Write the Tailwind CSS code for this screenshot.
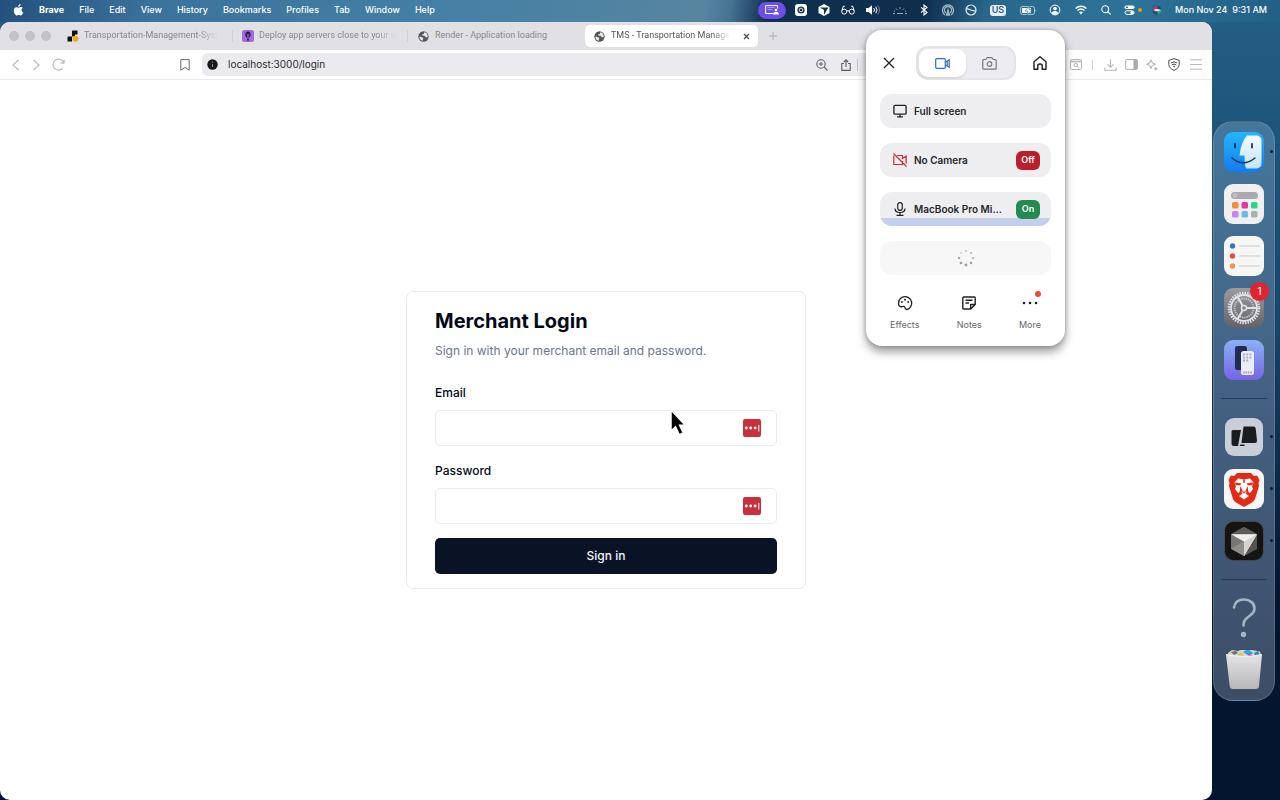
<!DOCTYPE html>
<html lang="en">
<head>
    <meta charset="UTF-8">
    <meta name="viewport" content="width=device-width, initial-scale=1.0">
    <title>TMS - Transportation Management System</title>
    <script src="https://cdn.jsdelivr.net/npm/@tailwindcss/browser@4"></script>
    <style>
        body {
            font-family: 'Inter', 'Liberation Sans', sans-serif;
        }
    </style>
</head>
<body class="relative flex h-screen flex-col overflow-hidden bg-linear-to-b from-[#245f86] via-[#17466a] via-40% to-[#041530] to-75%">
    <!-- Shared icons -->
    <svg class="hidden">
        <symbol id="globe" viewBox="0 0 16 16">
            <circle cx="8" cy="8" r="7.5" fill="#55565a"/>
            <path d="M2 8.2 5.5 8.6 8 10.5 7 11.6 7.2 14A6.2 6.2 0 0 1 2 8.2ZM9 1.9 8.6 4.2 6.4 4.6 6 6.6 9.6 7 11.6 9.6 14 8.8A6.2 6.2 0 0 0 9 1.9Z" fill="#e9e8ec"/>
        </symbol>
        <symbol id="lastpass" viewBox="0 0 18 18">
            <rect width="18" height="18" rx="2" fill="#c9303c"/>
            <circle cx="3.3" cy="9" r="1.4" fill="#fff"/>
            <circle cx="7.7" cy="9" r="1.4" fill="#fff"/>
            <circle cx="12.1" cy="9" r="1.4" fill="#fff"/>
            <path d="M15.8 6v6.5" stroke="#fff" stroke-width="1"/>
        </symbol>
    </svg>

    <!-- Menu bar -->
    <header class="flex h-[22px] shrink-0 items-center justify-between px-[13px] pb-0.5 text-[9px] text-white [background-image:linear-gradient(100deg,#24507d_0%,#3a739c_12%,#4480a5_35%,#5785a0_55%,#467391_57%,#102e4f_60%,#0f2d4c_72%,#28678b_77%,#2c7398_88%,#235f87_100%)]">
        <nav class="flex items-center gap-[15px] font-medium">
            <button aria-label="Apple menu">
                <svg class="h-3 w-[11px]" viewBox="0 0 22 24" fill="#fff"><path d="M15.2 0c.2 1.5-.4 2.9-1.3 4-.9 1.1-2.2 1.8-3.5 1.7-.2-1.4.5-2.9 1.3-3.8C12.6.8 14.100.1 15.2 0ZM19.8 8.1c-2 1.200-2.700 2.700-2.600 4.400.1 2 1.200 3.500 3.200 4.300-.9 2.600-3 6.200-5.200 6.200-1.500 0-2-.9-3.800-.9-1.900 0-2.400.9-3.800.9C4.800 23 1.600 17.500 1.600 13c0-4.300 2.700-6.700 5.400-6.700 1.800 0 3.200 1.100 4.300 1.100 1 0 2.700-1.200 4.800-1.200 1.500 0 2.900.7 3.700 1.900Z"/></svg>
            </button>
            <button class="font-bold">Brave</button>
            <button>File</button>
            <button>Edit</button>
            <button>View</button>
            <button>History</button>
            <button>Bookmarks</button>
            <button>Profiles</button>
            <button>Tab</button>
            <button>Window</button>
            <button>Help</button>
        </nav>
        <div class="flex items-center">
            <button aria-label="Screen sharing" class="mr-[7px] flex h-[17px] w-7 items-center justify-center rounded-full bg-[#6c4ee8]">
                <svg class="h-[10px] w-[14px]" viewBox="0 0 14 10" fill="none" stroke="#fff"><path d="M8 8.5H.6V.6h12v3" /><path d="M2.5 2.5h7M2.5 4.5h5" stroke-opacity=".4"/><circle cx="11" cy="5" r="1.3" fill="#fff" stroke="none"/><path d="M8 9.5c0-3.8 6-3.8 6 0Z" fill="#fff" stroke="none"/></svg>
            </button>
            <div class="flex items-center">
                <button aria-label="Recorder" class="flex w-[15px] justify-center"><svg class="size-3" viewBox="0 0 12 12"><rect width="12" height="12" rx="3" fill="#fff"/><circle cx="6" cy="6" r="3.6" fill="#1b3552"/><circle cx="6" cy="6" r="1.8" fill="none" stroke="#fff" stroke-width=".8"/></svg></button>
                <button aria-label="Cursor" class="ml-2 flex w-[15px] justify-center"><svg class="size-3" viewBox="0 0 12 12"><path d="M6 0 11.5 3v6L6 12 .5 9V3Z" fill="#fff"/><path d="M1.8 3.6h8.6L6 11V6Z" fill="#12304f"/></svg></button>
                <button aria-label="Reader" class="ml-[9px] flex w-4 justify-center"><svg class="h-[10px] w-[14px]" viewBox="0 0 14 10" fill="none" stroke="#fff"><circle cx="3.2" cy="6.6" r="2.5"/><circle cx="10.8" cy="6.6" r="2.5"/><path d="M5.7 6.2q1.3-1 2.6 0M.8 5.5 2.5 1l1.2.4M13.2 5.5 11.5 1l-1.2.4"/></svg></button>
                <button aria-label="Volume" class="ml-[9px] flex w-4 justify-center"><svg class="h-[10px] w-[15px]" viewBox="0 0 15 10" fill="none" stroke="#fff"><path d="M0 3h2.5L6 .3v9.4L2.5 7H0Z" fill="#fff" stroke="none"/><path d="M7.8 3q1.3 2 0 4M9.8 1.7q2.3 3.3 0 6.6"/><path d="M11.8.5q3.4 4.5 0 9" stroke-opacity=".4"/></svg></button>
                <button aria-label="Keyboard brightness" class="ml-[11px] flex w-4 justify-center opacity-60"><svg class="h-[10px] w-[14px]" viewBox="0 0 14 10" fill="none" stroke="#fff"><path d="M0 8.5h2M4 8.5h6M12 8.5h2M7 2v2M3 3.5l1.2 1.3M11 3.5 9.8 4.8M1 6l1 .4M13 6l-1 .4"/></svg></button>
                <button aria-label="Bluetooth" class="ml-[10px] flex w-3 justify-center"><svg class="h-3 w-2" viewBox="0 0 8 12" fill="none" stroke="#fff" stroke-width="1.1"><path d="m1 3.3 6 5.2L4 11V1l3 2.5-6 5.2"/></svg></button>
                <button aria-label="AirDrop" class="ml-3 flex w-3 justify-center opacity-60"><svg class="size-3" viewBox="0 0 12 12" fill="none" stroke="#fff" stroke-width="1.3"><path d="M3 11a5.5 5.5 0 1 1 6 0"/><path d="M3.9 9A3.6 3.6 0 1 1 8.1 9"/><path d="M4.5 11 6 6l1.5 5Z" fill="#fff"/></svg></button>
                <button aria-label="VPN" class="ml-[11px] flex w-3 justify-center"><svg class="size-3" viewBox="0 0 12 12" fill="none" stroke="#e5edf3" stroke-width="1.2"><circle cx="6" cy="6" r="5"/><path d="M1.5 5c3-1 5 3 9 1.5"/></svg></button>
                <button class="ml-[13px] flex h-[11px] w-4 items-center justify-center rounded-[3px] bg-white/90 font-semibold text-[#276489]">US</button>
                <button aria-label="Battery" class="ml-[14px] flex w-[17px] justify-center"><svg class="h-[9px] w-[17px]" viewBox="0 0 17 9"><rect x=".5" y=".5" width="14" height="8" rx="2" fill="none" stroke="#fff" stroke-opacity=".6"/><path d="M2 2h9v5H2Z" fill="#fff"/><path d="M15.5 3q1.5 1.5 0 3Z" fill="#fff" fill-opacity=".6"/><path d="M9.5 0 5 5h3L7 9l5-5.3H9Z" fill="#fff" stroke="#2a6b90" stroke-width=".6"/></svg></button>
                <button aria-label="Account" class="ml-3 flex w-3 justify-center"><svg class="size-3" viewBox="0 0 12 12"><circle cx="6" cy="6" r="4.9" fill="none" stroke="#fff"/><circle cx="6" cy="4.6" r="1.8" fill="#fff"/><path d="M2.6 9.2C3.6 6.3 8.4 6.3 9.4 9.2 8 11 4 11 2.6 9.2Z" fill="#fff"/></svg></button>
                <button aria-label="Wi-Fi" class="ml-[14px] flex w-3 justify-center"><svg class="h-[10px] w-3" viewBox="0 0 12 10" fill="none" stroke="#fff" stroke-width="1.4"><path d="M.6 3.4a8 8 0 0 1 10.8 0M2.5 5.5a5.3 5.3 0 0 1 7 0"/><path d="M4 7.3a3.2 3.2 0 0 1 4 0L6 9.5Z" fill="#fff" stroke="none"/></svg></button>
                <button aria-label="Spotlight" class="ml-[14px] flex w-[10px] justify-center"><svg class="size-[10px]" viewBox="0 0 10 10" fill="none" stroke="#fff" stroke-width="1.1"><circle cx="4.2" cy="4.2" r="3.4"/><path d="m6.7 6.7 2.8 2.8"/></svg></button>
                <button aria-label="Control Center" class="ml-[13px] flex w-[18px] items-center gap-[3px]"><svg class="h-[10px] w-[11px] shrink-0" viewBox="0 0 11 10"><rect x=".5" y=".5" width="10" height="3.6" rx="1.8" fill="#fff"/><circle cx="3" cy="2.3" r="1" fill="#2a6b90"/><rect x="1" y="5.8" width="9" height="3.6" rx="1.8" fill="none" stroke="#fff"/><circle cx="8" cy="7.6" r="1.7" fill="#fff"/></svg><span class="size-1 shrink-0 rounded-full bg-[#e39a2d]"></span></button>
                <button aria-label="Siri" class="ml-[10px] flex w-[10px] justify-center"><svg class="size-[10px]" viewBox="0 0 10 10"><circle cx="5" cy="5" r="4.5" fill="#2c4668"/><path d="M1 5c0-3 2-4.5 4-4.5L6 5Z" fill="#a83f7d"/><path d="m5 5 4.5-1C9.5 7 8 9 6 9.5Z" fill="#31a69c"/><path d="M1.5 5q3-2 7 0-4 2.5-7 0Z" fill="#f6e5f3"/></svg></button>
            </div>
            <time class="ml-[13px] font-medium whitespace-pre">Mon Nov 24  9:31 AM</time>
        </div>
    </header>

    <div class="flex min-h-0 flex-1">
        <!-- Browser window -->
        <section class="flex min-w-0 flex-1 flex-col overflow-hidden rounded-[10px] bg-white">
            <!-- Tab strip -->
            <div class="flex h-7 shrink-0 items-center bg-[#e1e0e5] font-['Roboto'] text-[9px] text-[#88878d]">
                <div class="flex w-[58px] shrink-0 gap-[6px] pl-[9px]">
                    <button aria-label="Close" class="size-[10px] rounded-full bg-[#c3c2c6]"></button>
                    <button aria-label="Minimize" class="size-[10px] rounded-full bg-[#c3c2c6]"></button>
                    <button aria-label="Zoom" class="size-[10px] rounded-full bg-[#c3c2c6]"></button>
                </div>
                <button class="flex h-3 w-[175px] shrink-0 items-center gap-[5px] border-r border-[#d0cfd4] pr-1 pl-[9px]">
                    <svg class="size-3 shrink-0" viewBox="0 0 12 12"><path d="M5 1.5C5 .7 5.5.5 6 .5h4.5v4H8v2H5v5H.5V7.5C.5 6.8 1 6.5 1.700 6.5H5Z" fill="#111"/><circle cx="8.5" cy="8.8" r="3" fill="#efa928"/></svg>
                    <span class="mask-r-from-85% whitespace-nowrap">Transportation-Management-Syst</span>
                </button>
                <button class="flex h-3 w-[175px] shrink-0 items-center gap-[5px] border-r border-[#d0cfd4] pr-1 pl-[9px]">
                    <svg class="size-3 shrink-0" viewBox="0 0 12 12"><rect width="12" height="12" rx="2" fill="#a06bdd"/><path d="M6 1.5C9.7 1.5 9.2 6.5 6.8 8H5.2C2.8 6.5 2.3 1.5 6 1.5ZM5 8.8h2v1.7H5Z" fill="#2c1650"/><path d="M5 3.5 6 7.5l1-4" fill="none" stroke="#a06bdd" stroke-width=".7"/></svg>
                    <span class="mask-r-from-85% whitespace-nowrap">Deploy app servers close to your u</span>
                </button>
                <button class="flex h-3 w-[177px] shrink-0 items-center gap-[6px] pr-1 pl-[10px]">
                    <svg class="size-[11px] shrink-0"><use href="#globe"/></svg>
                    <span class="whitespace-nowrap">Render - Application loading</span>
                </button>
                <div class="flex h-[22px] w-[173px] shrink-0 items-center justify-between rounded-[5px] bg-white pr-2 pl-[9px] text-[#55555a]">
                    <button class="flex items-center gap-[6px]">
                        <svg class="size-[11px] shrink-0"><use href="#globe"/></svg>
                        <span class="mask-r-from-85% whitespace-nowrap">TMS - Transportation Manage</span>
                    </button>
                    <button aria-label="Close tab"><svg class="size-[7px]" viewBox="0 0 7 7" stroke="#4a4a4f" stroke-width="1.2"><path d="m1 1 5 5M6 1 1 6"/></svg></button>
                </div>
                <button aria-label="New tab" class="ml-[11px]"><svg class="size-2" viewBox="0 0 8 8" stroke="#a9a8ad"><path d="M4 0v8M0 4h8"/></svg></button>
            </div>

            <!-- Toolbar -->
            <div class="flex h-[30px] shrink-0 items-center border-b border-[#e9e8ea] pr-[10px] pl-[11px]">
                <button aria-label="Back"><svg class="h-3 w-[9px]" viewBox="0 0 9 12" fill="none" stroke="#bbb" stroke-width="1.2"><path d="M7.5 1 2 6l5.5 5"/></svg></button>
                <button aria-label="Forward" class="ml-3"><svg class="h-3 w-[9px]" viewBox="0 0 9 12" fill="none" stroke="#bbb" stroke-width="1.2"><path d="m1.5 1 5.5 5-5.5 5"/></svg></button>
                <button aria-label="Reload" class="ml-[11px]"><svg class="size-[13px]" viewBox="0 0 13 13" fill="none" stroke="#bbb" stroke-width="1.2"><path d="M11.8 4.8A5.5 5.5 0 1 0 10.5 10.5M12 1.5v3.7H8.5"/></svg></button>
                <button aria-label="Bookmark this page" class="ml-[115px]"><svg class="h-3 w-[10px]" viewBox="0 0 10 12" fill="none" stroke="#68686e"><path d="M.8.6h8.4v10.6L5 8.4.8 11.2Z"/></svg></button>
                <div class="ml-3 flex h-[23px] flex-1 items-center rounded-[6px] bg-[#ebeaef] pl-[5px]">
                    <svg class="size-[11px] shrink-0" viewBox="0 0 11 11"><circle cx="5.5" cy="5.5" r="5.2" fill="#19191c"/><path d="M5.5 5v3M5.5 2.8v1" stroke="#8c8c90" stroke-width="1.1"/></svg>
                    <input type="text" aria-label="Address" value="localhost:3000/login" class="ml-[10px] min-w-0 flex-1 bg-transparent text-[10px] text-[#2c2c30] outline-none">
                    <button aria-label="Zoom level"><svg class="size-3" viewBox="0 0 12 12" fill="none" stroke="#5d5d63" stroke-width="1.1"><circle cx="5" cy="5" r="4.2"/><path d="m8.2 8.2 3.3 3.3M5 3v4M3 5h4"/></svg></button>
                    <button aria-label="Share" class="ml-[13px]"><svg class="h-3 w-[10px]" viewBox="0 0 10 12" fill="none" stroke="#5d5d63" stroke-width="1.1"><path d="M3 4.5H.8v6.9h8.4V4.5H7M5 8V1M2.8 3 5 .8 7.2 3"/></svg></button>
                    <span class="mr-52 ml-[6px] h-3 w-px bg-[#c6c5ca]"></span>
                </div>
                <div class="flex items-center">
                    <button aria-label="Search tabs" class="ml-1"><svg class="h-[11px] w-3" viewBox="0 0 12 11" fill="none" stroke="#b4b4b6"><rect x=".5" y=".5" width="11" height="10" rx="1"/><path d="M.5 2.500h11" stroke-width="1.5"/><circle cx="5.8" cy="6" r="1.7"/><path d="m7 7.2 1.5 1.5"/></svg></button>
                    <span class="ml-[10px] h-[10px] w-px bg-[#cfcfd1]"></span>
                    <button aria-label="Downloads" class="ml-[11px]"><svg class="h-3 w-[13px]" viewBox="0 0 13 12" fill="none" stroke="#b4b4b6" stroke-width="1.1"><path d="M6.5.5v7.5M3.5 5.3l3 3 3-3M.8 8.5v2.8h11.4V8.5"/></svg></button>
                    <button aria-label="Sidebar" class="ml-2"><svg class="h-[11px] w-[13px]" viewBox="0 0 13 11"><rect x=".6" y=".6" width="11.8" height="9.8" rx="1" fill="none" stroke="#aaa"/><path d="M8.5 1h3.7v9H8.5Z" fill="#aaa"/></svg></button>
                    <button aria-label="Leo AI" class="ml-2"><svg class="size-3" viewBox="0 0 12 12" fill="none" stroke="#aaa"><path d="M5 .8 6.3 3.9 9.4 5.2 6.3 6.5 5 9.6 3.7 6.5.6 5.2 3.7 3.9Z"/><path d="M9.8 8v3.5M8 9.8h3.5"/></svg></button>
                    <button aria-label="VPN shield" class="ml-[10px]"><svg class="h-[13px] w-3" viewBox="0 0 12 13" fill="none" stroke="#4b4b50"><path d="M6 .6 11.2 2.4V6.5Q10.8 10.5 6 12.4 1.2 10.5.8 6.5V2.4Z"/><path d="M2.8 5q3.2-2.2 6.4 0M3.8 6.8q2.2-1.4 4.4 0M5 8.5q1-.6 2 0"/></svg></button>
                    <button aria-label="Main menu" class="ml-[10px]"><svg class="h-[11px] w-3" viewBox="0 0 12 11" stroke="#b8b8ba"><path d="M0 .8h12M0 5.5h12M0 10.2h12"/></svg></button>
                </div>
            </div>

            <!-- Login page -->
            <main class="flex flex-1 items-center justify-center">
                <form class="w-full max-w-[400px] rounded-[7px] border border-[#e9eaee] px-7 pt-4 pb-[14px] text-[12px] text-[#020817]">
                    <h1 class="text-[20px] leading-[26px] font-bold">Merchant Login</h1>
                    <p class="mt-[7px] leading-5 text-[#69758a]">Sign in with your merchant email and password.</p>
                    <label for="email" class="mt-[22px] block leading-5 font-medium">Email</label>
                    <div class="relative mt-[7px]">
                        <input id="email" type="email" class="block h-9 w-full rounded-[5px] border border-[#e9ebef] pr-11 pl-3 outline-none">
                        <svg class="absolute top-[9px] right-4 size-[18px]"><use href="#lastpass"/></svg>
                    </div>
                    <label for="password" class="mt-[15px] block leading-5 font-medium">Password</label>
                    <div class="relative mt-[7px]">
                        <input id="password" type="password" class="block h-9 w-full rounded-[5px] border border-[#e9ebef] pr-11 pl-3 outline-none">
                        <svg class="absolute top-[9px] right-4 size-[18px]"><use href="#lastpass"/></svg>
                    </div>
                    <button type="button" class="mt-[14px] block h-9 w-full rounded-[5px] bg-[#0a1326] font-medium text-[#f3f5f8]">Sign in</button>
                </form>
            </main>
        </section>

        <!-- Dock -->
        <aside class="flex w-[68px] shrink-0 items-center pl-px">
            <nav class="flex w-[62px] flex-col items-center gap-3 rounded-[20px] border border-white/15 bg-linear-to-b from-[#43779b] via-[#446284] via-45% to-[#3c4d66] py-[10px]">
                <button aria-label="Finder" class="relative">
                    <svg class="size-10" viewBox="0 0 40 40">
                        <defs>
                            <linearGradient id="finder" x1="0" y1="0" x2="0" y2="1"><stop offset="0" stop-color="#25b6f8"/><stop offset="1" stop-color="#127cf0"/></linearGradient>
                            <linearGradient id="face" x1="0" y1="0" x2="0" y2="1"><stop offset="0" stop-color="#f6faff"/><stop offset="1" stop-color="#c5e4fb"/></linearGradient>
                        </defs>
                        <rect width="40" height="40" rx="9" fill="url(#finder)"/>
                        <path d="M23 3.500h9.500a5 5 0 0 1 5 5v23a5 5 0 0 1-5 5H22q-1.500-5-1.500-13H15.500Q17 10 23 3.500Z" fill="url(#face)"/>
                        <path d="M11 12v3.500M28 12v3.500" stroke="#153656" stroke-width="1.8" stroke-linecap="round"/>
                        <path d="M8 26q11 9.500 23 0" fill="none" stroke="#153656" stroke-width="1.5" stroke-linecap="round"/>
                    </svg>
                    <span class="absolute top-[18px] -right-[9px] size-[3px] rounded-full bg-[#071629]"></span>
                </button>
                <button aria-label="Launchpad">
                    <svg class="size-10" viewBox="0 0 40 40">
                        <rect width="40" height="40" rx="9" fill="#f0f0f2"/>
                        <rect x="7" y="8" width="27" height="7" rx="3.5" fill="#aaa9ad"/><circle cx="11" cy="11.5" r="1.5" fill="none" stroke="#e0e0e3" stroke-width=".8"/>
                        <rect x="8" y="18" width="6.5" height="6.5" rx="1.5" fill="#ee9239"/><rect x="17.5" y="18" width="6.5" height="6.5" rx="1.5" fill="#e437a0"/><rect x="27" y="18" width="6.5" height="6.5" rx="1.5" fill="#28d789"/>
                        <rect x="8" y="27" width="6.5" height="6.5" rx="1.5" fill="#c685f2"/><rect x="17.5" y="27" width="6.5" height="6.5" rx="1.5" fill="#67bde8"/><rect x="27" y="27" width="6.5" height="6.5" rx="1.5" fill="#aeadaf"/>
                    </svg>
                </button>
                <button aria-label="Reminders">
                    <svg class="size-10" viewBox="0 0 40 40">
                        <rect width="40" height="40" rx="9" fill="#f6f6f7"/>
                        <circle cx="8.5" cy="10" r="2.7" fill="#3476cf"/><circle cx="8.5" cy="20" r="2.7" fill="#df4f48"/><circle cx="8.5" cy="30" r="2.7" fill="#eb9550"/>
                        <path d="M15 10h21M15 20h21M15 30h21" stroke="#c9c9cb" stroke-width="1"/>
                    </svg>
                </button>
                <button aria-label="System Settings" class="relative">
                    <svg class="size-10" viewBox="0 0 40 40">
                        <defs><linearGradient id="settings" x1="0" y1="0" x2="0" y2="1"><stop offset="0" stop-color="#9a9ca0"/><stop offset="1" stop-color="#606267"/></linearGradient></defs>
                        <rect width="40" height="40" rx="9" fill="url(#settings)"/>
                        <g fill="none" stroke="#e2e3e5">
                            <circle cx="20" cy="20" r="15" stroke-width="2.5" stroke-dasharray="1.5 1.12"/>
                            <circle cx="20" cy="20" r="13" stroke-width="1.8"/>
                            <circle cx="20" cy="20" r="9.5" stroke="#c4c5c8" stroke-width="2" stroke-dasharray="1.3 .9"/>
                            <circle cx="20" cy="20" r="2.5" stroke-width="1.5"/>
                            <path d="M22.5 20H33M18.700 17.800 13.500 8.800M18.700 22.200 13.500 31.200" stroke-width="2"/>
                        </g>
                    </svg>
                    <span class="absolute -top-[6px] -right-[5px] flex size-[19px] items-center justify-center rounded-full bg-[#dc2530] text-[10px] text-white">1</span>
                </button>
                <button aria-label="iPhone Mirroring">
                    <svg class="size-10" viewBox="0 0 40 40">
                        <defs><linearGradient id="mirror" x1="0" y1="0" x2="0" y2="1"><stop offset="0" stop-color="#8bb0f4"/><stop offset="1" stop-color="#7565e6"/></linearGradient></defs>
                        <rect width="40" height="40" rx="9" fill="url(#mirror)"/>
                        <rect x="11" y="6" width="12" height="24" rx="2.5" fill="#202c54"/>
                        <rect x="17" y="11" width="13" height="24" rx="2.5" fill="#e9edf8"/>
                        <path d="M19 14.5h9M19 17.5h9M19 20.5h6" stroke="#a9afc3" stroke-width="2" stroke-dasharray="2 1.2"/>
                        <path d="M19 32.5h9" stroke="#9aa2bb" stroke-width="2" stroke-dasharray="1.6 .8"/>
                    </svg>
                </button>
                <hr class="my-[6px] w-[46px] border-[#263d58]">
                <button aria-label="Screen recorder" class="relative">
                    <svg class="size-10" viewBox="0 0 40 40">
                        <rect x="1" y="1" width="38" height="38" rx="9" fill="#c9ced8"/>
                        <path d="M9 13h8l-3 16H10q-2.500 0-2.500-2.500v-12Q7.500 13 9 13Z" fill="#1b1c20"/>
                        <path d="M19.500 9.500h10q2 0 2.200 2l1.300 12q.2 2.500-2 2.500H17.500Z" fill="#1b1c20"/>
                        <path d="M16.500 27.500h4v1.500h-5Z" fill="#1b1c20"/>
                    </svg>
                    <span class="absolute top-[18px] -right-[9px] size-[3px] rounded-full bg-[#071629]"></span>
                </button>
                <button aria-label="Brave" class="relative">
                    <svg class="size-10" viewBox="0 0 40 40">
                        <rect width="40" height="40" rx="9" fill="#f7f6f5"/>
                        <path d="m13 4 14 0 3 3 3-.5 2.500 4.500-1 3 .5 3-4 13q-1 2-3 3.500l-8 4.500-8-4.500q-2-1.500-3-3.500L5 17l.5-3-1-3L7 6.500l3 .5Z" fill="#e32a16"/>
                        <path d="m14 9.500 6 1 6-1 3.500 4-1.500 4 1 2.500-3 4-3-1.500-1.500 2 3.500 2.500-5 3.500-5-3.500 3.500-2.500-1.500-2L14 24l-3-4 1-2.500-1.500-4Z" fill="#fff"/>
                        <path d="m11 13.500 6.500 1-1.500 2-4.500-.5ZM29 13.500l-6.500 1 1.500 2 4.500-.5ZM16.500 17l2 5-3 1.500M23.500 17l-2 5 3 1.500M17.500 22.500h5L20 24.500ZM19 10.500h2l-.5 3.500h-1Z" fill="#e32a16"/>
                    </svg>
                    <span class="absolute top-[18px] -right-[9px] size-[3px] rounded-full bg-[#071629]"></span>
                </button>
                <button aria-label="Cursor" class="relative">
                    <svg class="size-10" viewBox="0 0 40 40">
                        <rect x=".5" y=".5" width="39" height="39" rx="9" fill="#141412" stroke="#4b4a48"/>
                        <path d="M20 6 33 13.200v14.600L20 35 7 27.800V13.200Z" fill="#777675"/>
                        <path d="M7 13.200 20 6l13 7.200Z" fill="#5d5c5b"/>
                        <path d="M7 27.800 20 20v15Z" fill="#8f8e8d"/>
                        <path d="M33 27.800V13.200L20 35Z" fill="#555453"/>
                        <path d="M7 13.200h26L20 35V20.500Z" fill="#f2f1ef"/>
                        <path d="M20 20.500 33 13.200 20 35Z" fill="#d5d4d2"/>
                    </svg>
                    <span class="absolute top-[18px] -right-[9px] size-[3px] rounded-full bg-[#071629]"></span>
                </button>
                <hr class="my-[6px] w-[46px] border-[#263d58]">
                <button aria-label="Missing application">
                    <svg class="size-10" viewBox="0 0 40 40" fill="none" stroke="#a7b4c4" stroke-width="2.6" stroke-linecap="round"><path d="M10 9.500C11 3 16 1.500 20 1.500c6 0 10.500 3.500 10.500 9 0 8.500-11 6.500-11 17"/><circle cx="19.5" cy="36.5" r="1.4" fill="#a7b4c4"/></svg>
                </button>
                <button aria-label="Trash">
                    <svg class="size-10" viewBox="0 0 40 40">
                        <defs><linearGradient id="bin" x1="0" y1="0" x2="0" y2="1"><stop offset="0" stop-color="#e4e3e5"/><stop offset="1" stop-color="#b7b6b9"/></linearGradient></defs>
                        <path d="m4 3 4-3 6 1 4-2 5 1 5 0 8 1.500 1 4-16 3-17-2Z" fill="#d2d4d4"/>
                        <path d="m19 2 5-3 5 4-4 3Z" fill="#32a5d4"/><path d="m30 3 4-2 2 4-5 2Z" fill="#3b83bd"/><path d="m14 4 4-1 2 4h-6Z" fill="#d9c33b"/><path d="m23 4 6 1-3 2Z" fill="#c54897"/><path d="m7 2 5-1 2 2-4 2Z" fill="#6d7079"/>
                        <path d="M2 4.500q18 3.800 36 0l-3 31.500q-.3 3-3 3H9q-3 0-3.300-3Z" fill="url(#bin)"/>
                        <path d="M2 4.500q18 3.800 36 0" fill="none" stroke="#f4f4f5"/>
                    </svg>
                </button>
            </nav>
        </aside>
    </div>

    <!-- Recorder panel, floats over the browser -->
    <div class="absolute top-[30px] right-[215px] w-[199px] rounded-[16px] bg-white px-[14px] pt-4 pb-[15px] text-[10px] text-[#26262b] shadow-[0_6px_10px_rgba(0,0,0,0.38),0_0_4px_rgba(0,0,0,0.25)]">
        <div class="flex items-center justify-between pr-1 pl-[3px]">
            <button aria-label="Close recorder"><svg class="size-3" viewBox="0 0 12 12" stroke="#202024" stroke-width="1.3"><path d="m1 1 10 10M11 1 1 11"/></svg></button>
            <div class="ml-1 flex h-[34px] w-[100px] rounded-[12px] border-2 border-[#e4e4e7] bg-[#ededf1] p-px">
                <button aria-label="Video" class="flex flex-1 items-center justify-center rounded-[9px] bg-white shadow-sm"><svg class="h-[11px] w-[15px]" viewBox="0 0 15 11" fill="none" stroke="#2f6cc4" stroke-width="1.2"><rect x=".7" y=".7" width="9.6" height="9.6" rx="1"/><path d="M10.5 4 14.2 1.8v7.4L10.5 7M12.3 3v5"/></svg></button>
                <button aria-label="Screenshot" class="flex flex-1 items-center justify-center"><svg class="h-[13px] w-[15px]" viewBox="0 0 15 13" fill="none" stroke="#77777d" stroke-width="1.2"><path d="M.8 3.5q0-1 1-1h2L5.200.7h4.600l1.400 1.800h2q1 0 1 1v7.700q0 1-1 1H1.800q-1 0-1-1Z"/><circle cx="7.5" cy="7" r="2.3"/></svg></button>
            </div>
            <button aria-label="Home"><svg class="h-[14px] w-[14px]" viewBox="0 0 14 14" fill="none" stroke="#202024" stroke-width="1.4" stroke-linejoin="round"><path d="M1 5.800 7 .8l6 5v7.400H9.200V9.500q0-1.500-2.200-1.500T4.800 9.500v3.700H1Z"/></svg></button>
        </div>

        <div class="mt-[14px] flex flex-col gap-[15px]">
            <button class="flex h-[34px] items-center gap-[7px] rounded-[12px] bg-[#eeeef1] px-[13px] font-semibold">
                <svg class="size-[14px]" viewBox="0 0 14 14" fill="none" stroke="#202024" stroke-width="1.3"><rect x=".9" y="1.4" width="12.2" height="8.8" rx="1"/><path d="M7 10.2v2.6M4 12.8h6"/></svg>
                Full screen
            </button>
            <div class="flex h-[34px] items-center gap-[7px] rounded-[12px] bg-[#eeeef1] pr-[11px] pl-[13px] font-semibold">
                <svg class="size-[14px]" viewBox="0 0 14 14" fill="none" stroke="#c3303a" stroke-width="1.2"><path d="M4 2.5h5.500v3L13.200 3.200v7.600M9.500 8v3.500H.8V2.500M.5.5l13 13"/></svg>
                <span class="flex-1 whitespace-nowrap">No Camera</span>
                <button class="h-[19px] w-6 rounded-[6px] bg-[#ba1f2b] text-[9px] text-white">Off</button>
            </div>
            <div class="relative flex h-[34px] items-center gap-[7px] overflow-hidden rounded-[12px] bg-[#eeeef1] pr-[11px] pl-[13px] font-semibold">
                <span class="absolute inset-x-0 bottom-0 h-2 bg-[#c3d0ec]"></span>
                <svg class="relative size-[14px]" viewBox="0 0 14 14" fill="none" stroke="#202024" stroke-width="1.2"><rect x="4.7" y=".6" width="4.6" height="7.8" rx="2.3"/><path d="M2 6.5c0 5.3 10 5.3 10 0M7 10.5v2.8M3.5 13.3h7"/></svg>
                <span class="relative flex-1 whitespace-nowrap">MacBook Pro Mi...</span>
                <button class="relative h-[19px] w-6 rounded-[6px] bg-[#238a50] text-[9px] text-white">On</button>
            </div>
            <button aria-label="Loading" class="flex h-[34px] items-center justify-center rounded-[12px] bg-[#f7f7f8]">
                <svg class="size-[18px]" viewBox="0 0 18 18" fill="#9b9b9e"><circle cx="9" cy="2" r="1.1" fill="#c4c4c6"/><circle cx="14" cy="4" r="1.1" fill="#b8b8ba"/><circle cx="16" cy="9" r="1.1" fill="#aaa"/><circle cx="14" cy="14" r="1.2"/><circle cx="9" cy="16" r="1.4"/><circle cx="4" cy="14" r="1.3"/><circle cx="2" cy="9" r="1.2" fill="#aaa"/><circle cx="4" cy="4" r="1" fill="#ccc"/></svg>
            </button>
        </div>

        <div class="mt-5 flex justify-between px-[10px] text-[9px] leading-[12px] text-[#66666b]">
            <button class="flex flex-col items-center gap-2">
                <svg class="size-4" viewBox="0 0 16 16" fill="none" stroke="#202024" stroke-width="1.3"><path d="M1.500 9A6.600 6.600 0 1 1 14.500 9.500Q13 14.500 9.500 14.500C7.800 14.500 8.300 12.500 7.500 11.700 6.500 10.700 5 12 3.500 11.700 2 11.300 1.500 10 1.500 9Z"/><g fill="#202024" stroke="none"><circle cx="4.8" cy="7" r="1"/><circle cx="8" cy="4.8" r="1"/><circle cx="11.2" cy="7" r="1"/></g></svg>
                Effects
            </button>
            <button class="flex flex-col items-center gap-2">
                <svg class="size-4" viewBox="0 0 16 16" fill="none" stroke="#202024" stroke-width="1.4" stroke-linejoin="round"><path d="M2.800 2h10.400q1 0 1 1v6.500L9.700 14H2.800q-1 0-1-1V3q0-1 1-1ZM14 9.500H9.700V14M4.500 5.300h7M4.500 8h3.500"/></svg>
                Notes
            </button>
            <button class="relative flex flex-col items-center gap-2">
                <svg class="size-4" viewBox="0 0 16 16" fill="#202024"><circle cx="2" cy="8" r="1.3"/><circle cx="8" cy="8" r="1.3"/><circle cx="14" cy="8" r="1.3"/></svg>
                More
                <span class="absolute -top-1 right-0 size-[6px] rounded-full bg-[#e84c3d]"></span>
            </button>
        </div>
    </div>

    <!-- Mouse pointer -->
    <svg class="pointer-events-none absolute top-[408px] left-[668px] h-[30px] w-5" viewBox="0 0 20 30"><path d="M3 2v21l4.500-4.300 3.800 8 4-1.800-3.700-7.700h5.700Z" fill="#000" stroke="#fff" stroke-width="1.5"/></svg>
</body>
</html>
